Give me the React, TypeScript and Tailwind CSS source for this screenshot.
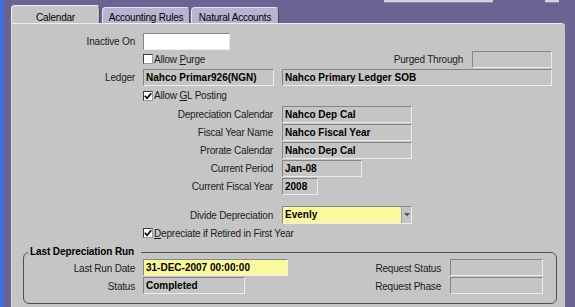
import React from "react";

const FIELD =
  "h-[17px] border border-t-[#858585] border-l-[#858585] border-b-[#ececec] border-r-[#ececec] bg-[#c5c5c5] font-bold text-[10px] leading-[15px] pl-[2px] text-black whitespace-nowrap overflow-hidden";
const YFIELD =
  "h-[17px] border border-t-[#858585] border-l-[#858585] border-b-[#ececec] border-r-[#ececec] bg-[#fbf99e] font-bold text-[10px] leading-[15px] pl-[2px] text-black whitespace-nowrap overflow-hidden";
const LABEL = "text-right whitespace-nowrap tracking-[-0.2px] text-[#1c1c1c] pt-[2px]";

function Check({ checked }: { checked?: boolean }) {
  return (
    <span className="w-[10px] h-[10px] bg-white border border-t-[#3a3a3a] border-l-[#3a3a3a] border-b-[#9a9a9a] border-r-[#9a9a9a] flex items-center justify-center shrink-0">
      {checked && (
        <svg width="8" height="8" viewBox="0 0 8 8">
          <path d="M0.8 3.8 L3 6.2 L7.3 1.2" stroke="#000" strokeWidth="1.7" fill="none" />
        </svg>
      )}
    </span>
  );
}

function Row({ children, h = "h-[18px]" }: { children: React.ReactNode; h?: string }) {
  return <div className={`flex items-center ${h}`}>{children}</div>;
}

export default function App() {
  return (
    <div className="w-[575px] h-[307px] flex bg-[#6b6392] overflow-hidden font-['Liberation_Sans',Arial,sans-serif] text-[10px] leading-none">
      <div className="w-[4px] bg-[#3f6fd6]" />
      <div className="w-[7px] bg-[#6a6290]" />
      <div className="w-[554px] flex flex-col">
        {/* top strip */}
        <div className="h-[4px] flex items-start">
          <div className="ml-[373px] w-[109px] h-[3px] bg-[#d3d1e2] border-b border-[#8d89ab]" />
          <div className="ml-[52px] w-[14px] h-[3px] bg-[#d3d1e2] border-b border-[#8d89ab]" />
        </div>
        {/* tabs */}
        <div className="h-[19px] flex items-end">
          <div className="w-[89px] h-[18px] bg-[#c5c5c5] rounded-t-[4px] border-t border-l border-t-[#f0f0f0] border-l-[#f0f0f0] border-r border-r-[#4a4a4a] flex items-center justify-center pt-[6px] text-black tracking-[-0.2px]">
            Calendar
          </div>
          <div className="ml-[2px] w-[88px] h-[16px] bg-[#b7b3d0] rounded-t-[4px] border-t border-l border-t-[#e6e4f0] border-l-[#e6e4f0] border-r border-r-[#4a4768] flex items-center justify-center pt-[5px] text-black tracking-[-0.2px]">
            Accounting Rules
          </div>
          <div className="ml-[1px] w-[88px] h-[16px] bg-[#b7b3d0] rounded-t-[4px] border-t border-l border-t-[#e6e4f0] border-l-[#e6e4f0] border-r border-r-[#4a4768] flex items-center justify-center pt-[5px] text-black tracking-[-0.2px]">
            Natural Accounts
          </div>
        </div>
        {/* panel */}
        <div className="flex-1 bg-[#c5c5c5] border-t border-l border-t-[#eeeeee] border-l-[#dcdcdc] rounded-tr-[4px] pt-[8px] flex flex-col">
          <Row>
            <div className={`${LABEL} w-[123px]`}>Inactive On</div>
            <div className="ml-[8px] w-[87px] h-[17px] bg-white border border-t-[#858585] border-l-[#858585] border-b-[#ececec] border-r-[#ececec]" />
          </Row>
          <Row>
            <div className="ml-[131px] flex items-center gap-[1px]">
              <Check />
              <span className="tracking-[-0.2px] text-[#1c1c1c] pt-[1px]">
                Allow <span className="underline">P</span>urge
              </span>
            </div>
            <div className="flex-1" />
            <div className={LABEL}>Purged Through</div>
            <div className={`${FIELD} ml-[9px] w-[80px]`} />
            <div className="w-[13px]" />
          </Row>
          <Row>
            <div className={`${LABEL} w-[123px]`}>Ledger</div>
            <div className={`${FIELD} ml-[8px] w-[131px]`}>Nahco Primar926(NGN)</div>
            <div className={`${FIELD} ml-[8px] w-[270px]`}>Nahco Primary Ledger SOB</div>
          </Row>
          <Row h="h-[19px]">
            <div className="ml-[131px] flex items-center gap-[1px]">
              <Check checked />
              <span className="tracking-[-0.2px] text-[#1c1c1c] pt-[1px]">
                Allow <span className="underline">G</span>L Posting
              </span>
            </div>
          </Row>
          <Row>
            <div className={`${LABEL} w-[261px]`}>Depreciation Calendar</div>
            <div className={`${FIELD} ml-[9px] w-[130px]`}>Nahco Dep Cal</div>
          </Row>
          <Row>
            <div className={`${LABEL} w-[261px]`}>Fiscal Year Name</div>
            <div className={`${FIELD} ml-[9px] w-[130px]`}>Nahco Fiscal Year</div>
          </Row>
          <Row>
            <div className={`${LABEL} w-[261px]`}>Prorate Calendar</div>
            <div className={`${FIELD} ml-[9px] w-[130px]`}>Nahco Dep Cal</div>
          </Row>
          <Row>
            <div className={`${LABEL} w-[261px]`}>Current Period</div>
            <div className={`${FIELD} ml-[9px] w-[80px]`}>Jan-08</div>
          </Row>
          <Row>
            <div className={`${LABEL} w-[261px]`}>Current Fiscal Year</div>
            <div className={`${FIELD} ml-[9px] w-[36px]`}>2008</div>
          </Row>
          <div className="mt-[11px]">
            <Row>
              <div className={`${LABEL} w-[261px]`}>Divide Depreciation</div>
              <div className="ml-[9px] w-[130px] h-[18px] flex border border-t-[#858585] border-l-[#858585] border-b-[#ececec] border-r-[#ececec]">
                <div className="flex-1 bg-[#fbf99e] font-bold text-black leading-[16px] pl-[2px]">Evenly</div>
                <div className="w-[10px] bg-[#c5c5c5] border-l border-[#a0a0a0] flex items-center justify-center">
                  <svg width="6" height="4" viewBox="0 0 6 4">
                    <path d="M0 0 L6 0 L3 3.5 Z" fill="#555" />
                  </svg>
                </div>
              </div>
            </Row>
          </div>
          <Row>
            <div className="ml-[131px] flex items-center gap-[1px]">
              <Check checked />
              <span className="tracking-[-0.2px] text-[#1c1c1c] pt-[1px]">
                <span className="underline">D</span>epreciate if Retired in First Year
              </span>
            </div>
          </Row>
          <fieldset className="mt-[4px] ml-[11px] mr-[8px] border border-[#505050] rounded-[6px] pt-[1px] pb-[8px]">
            <legend className="ml-[4px] pl-[2px] pr-[7px] font-bold text-black leading-[12px] tracking-[-0.1px]">
              Last Depreciation Run
            </legend>
            <div className="grid grid-cols-[111px_8px_144px_154px_9px_93px]">
              <div className={`${LABEL} h-[18px] flex items-center justify-end`}>Last Run Date</div>
              <div />
              <div className={`${YFIELD} w-[145px]`}>31-DEC-2007 00:00:00</div>
              <div className={`${LABEL} h-[18px] flex items-center justify-end`}>Request Status</div>
              <div />
              <div className={`${FIELD} w-[93px]`} />
              <div className={`${LABEL} h-[18px] flex items-center justify-end`}>Status</div>
              <div />
              <div className={`${FIELD} w-[102px]`}>Completed</div>
              <div className={`${LABEL} h-[18px] flex items-center justify-end`}>Request Phase</div>
              <div />
              <div className={`${FIELD} w-[93px]`} />
            </div>
          </fieldset>
        </div>
      </div>
      <div className="flex-1 bg-[#6b6392]" />
    </div>
  );
}
